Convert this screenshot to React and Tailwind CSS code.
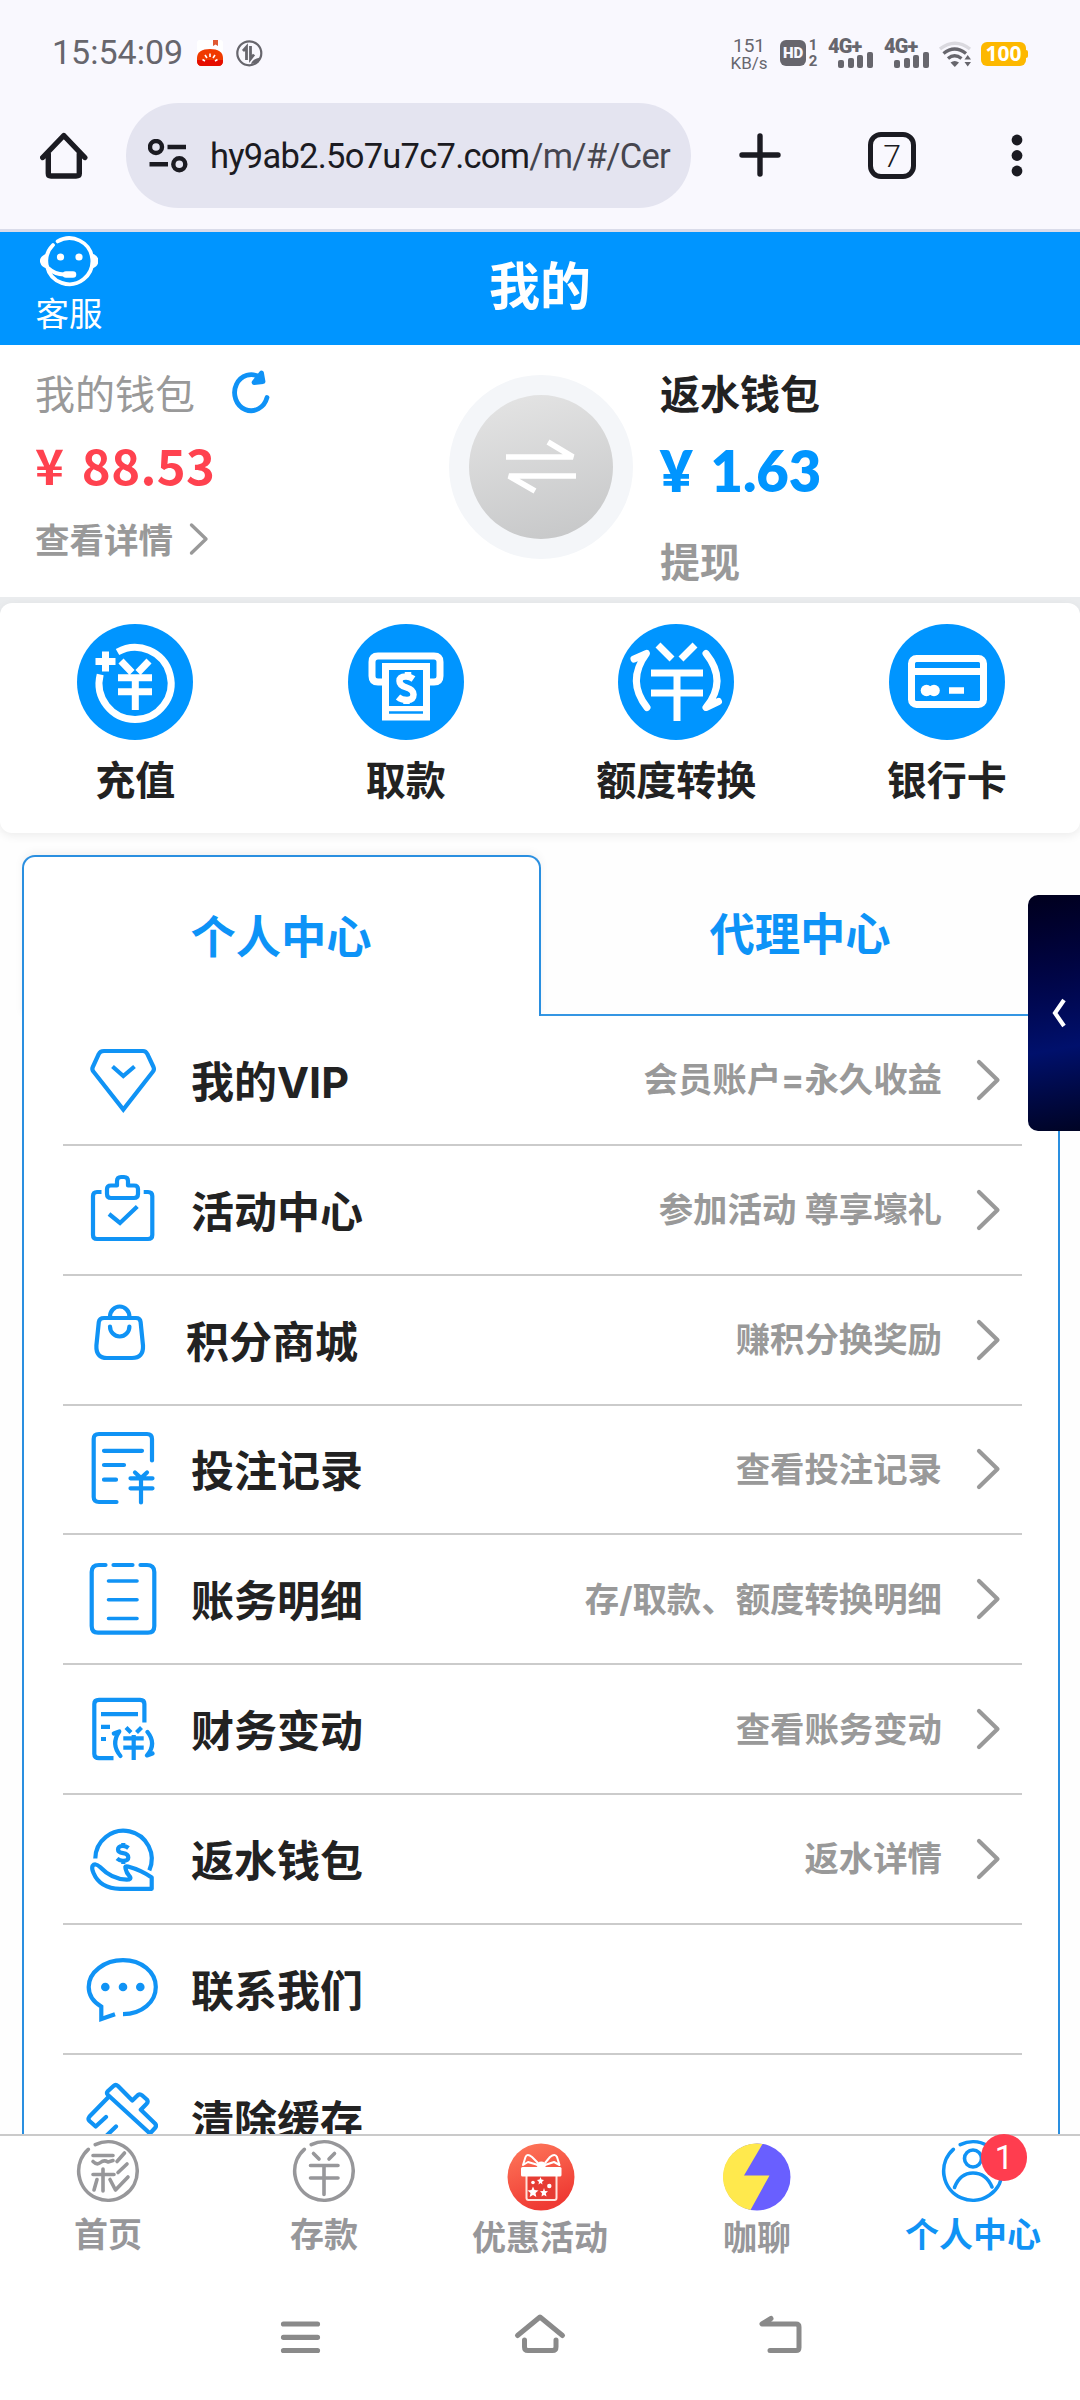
const ACTIONS = [
  { label: '充值', Icon: RechargeIcon },
  { label: '取款', Icon: WithdrawIcon },
  { label: '额度转换', Icon: TransferIcon },
  { label: '银行卡', Icon: BankCardIcon },
];

const MENU = [
  { label: '我的VIP', desc: '会员账户=永久收益', Icon: VipIcon },
  { label: '活动中心', desc: '参加活动 尊享壕礼', Icon: ActivityIcon },
  { label: '积分商城', desc: '赚积分换奖励', Icon: MallIcon, tight: true },
  { label: '投注记录', desc: '查看投注记录', Icon: RecordIcon },
  { label: '账务明细', desc: '存/取款、额度转换明细', Icon: LedgerIcon },
  { label: '财务变动', desc: '查看账务变动', Icon: ChangeIcon },
  { label: '返水钱包', desc: '返水详情', Icon: RebateIcon },
  { label: '联系我们', Icon: ContactIcon },
  { label: '清除缓存', Icon: ClearIcon },
];

const line = {
  fill: 'none',
  stroke: 'currentColor',
  strokeLinecap: 'round',
  strokeLinejoin: 'round',
};

function MenuSvg({ children }) {
  return (
    <svg width="72" height="80" viewBox="0 0 72 80" {...line} strokeWidth="4.2" className="shrink-0 text-[#1093f5]">
      {children}
    </svg>
  );
}

function VipIcon() {
  return (
    <MenuSvg>
      <path d="M18 11H57Q60 11 61.3 14L67.5 27Q68.6 29.5 67 31.5L37.3 69.5L7.4 31.5Q5.6 29.5 6.8 27L12.8 14Q14 11 18 11Z" strokeLinejoin="miter" />
      <path d="M26.5 26.5L37.3 36L48.5 26.5" strokeLinecap="butt" strokeLinejoin="miter" />
    </MenuSvg>
  );
}

function ActivityIcon() {
  return (
    <MenuSvg>
      <path d="M15.5 22H11Q7 22 7 26V65Q7 69 11 69H62Q66.3 69 66.3 65V26Q66.3 22 62 22H57.7" strokeLinecap="butt" />
      <path d="M31 15.5V11Q31 7 35 7H38Q42 7 42 11V15.5H48Q52 15.5 52 19V24Q52 28 48 28H25Q21 28 21 24V19Q21 15.5 25 15.5Z" />
      <path d="M23 44L34 53L51.3 36.5" strokeLinecap="butt" strokeLinejoin="miter" />
    </MenuSvg>
  );
}

function MallIcon() {
  return (
    <MenuSvg>
      <path d="M18 18H50Q54.2 18 54.6 22L57 45.5Q57.6 58 46 58H21Q9.8 58 10.4 45.5L12.8 22Q13.4 18 18 18Z" />
      <path d="M24 17.5V16.5A9.7 10 0 0 1 43.4 16.5V17.5" />
      <path d="M24 26.5A9.7 10 0 0 0 43.4 26.5" />
    </MenuSvg>
  );
}

function RecordIcon() {
  return (
    <MenuSvg>
      <path d="M30.5 73H13Q7.7 73 7.7 68V10Q7.7 5 13 5H61Q66 5 66 10V31.5" />
      <path d="M18 21.8H56M18 36H38M18 50.7H30" />
      <path d="M49 43.5L55 49L61 43.5M44.5 49.3H66.5M44.5 59.3H66.5M55 49V73.5" />
    </MenuSvg>
  );
}

function LedgerIcon() {
  return (
    <MenuSvg>
      <path d="M19.5 6H13Q5.7 6 5.7 13V67Q5.7 73.7 12 73.7H62Q68.3 73.7 68.3 67V13Q68.3 6 61 6H54.5M27.5 6H46.5" />
      <path d="M22.5 22H51M22.5 40.8H51M22.5 59.5H51" strokeWidth="3.6" />
    </MenuSvg>
  );
}

function ChangeIcon() {
  return (
    <MenuSvg>
      <g strokeLinecap="butt">
        <path d="M27.5 69.2H13Q8.3 69.2 8.3 65V15Q8.3 10.8 13 10.8H54Q58.4 10.8 58.4 15V33.5" />
        <path d="M15 25.2H52M15 37.8H24M15 50H20" />
        <path d="M40 38.5L45 43.5M55.5 38.5L50.5 43.5M37.3 49.3H57.7M37.3 58.6H57.7M47.7 46V71" />
      </g>
      <path d="M27.8 44.5L33.3 42.5Q24.5 55 34.5 67" />
      <path d="M61.5 43Q71 55 61 66.5L66.5 64.5" />
    </MenuSvg>
  );
}

function RebateIcon() {
  return (
    <MenuSvg>
      <path d="M9.3 39.5A28.2 28.2 0 1 1 63.3 51.3" strokeLinecap="butt" />
      <path d="M6.5 47Q9 43.5 14 48Q27 61.5 43 60.5Q46 59.5 43 56.5Q40.5 54 39.5 49.5Q38.5 46.5 42 47.5Q55 51 65.7 58.5V69.8H34Q14 69.5 7.5 54Q5.5 49.5 6.5 47Z" />
      <path d="M42.5 29Q40 27 37 27Q32 27 32 30.5Q32 33.5 37 34.2Q42.3 35 42.3 38.5Q42.3 41.8 37 41.8Q33.5 41.8 31 39.5M37.3 24V27M37.3 42V45" strokeLinecap="butt" />
    </MenuSvg>
  );
}

function ContactIcon() {
  return (
    <MenuSvg>
      <path d="M37 65.2C56 65 69.8 53 69.8 38C69.8 23 55.5 11.2 37 11.2S2.7 23 2.7 38C2.7 46 7.5 53 15.3 57.6V70L29 65.2" strokeLinecap="butt" strokeLinejoin="miter" />
      <g fill="currentColor" stroke="none">
        <circle cx="19.3" cy="38" r="4.3" />
        <circle cx="37" cy="38" r="4.3" />
        <circle cx="54.3" cy="38" r="4.3" />
      </g>
    </MenuSvg>
  );
}

function ClearIcon() {
  return (
    <MenuSvg>
      <path d="M64 54.5L22 16Q20 14 22 12L27.5 7Q29.7 5 32 7L46.3 21.5L52 16Q54 14.5 56 16.3L60.8 20.5Q62.6 22.5 60.5 24.8L54.8 30.8L69 44.5Q71 46.8 69 49Z" />
      <path d="M22.5 18L3.5 37.5Q1.5 40 3.5 42L9.7 47.5L20 38M30 47.5L16 61" />
    </MenuSvg>
  );
}

function RoundAction({ children }) {
  return (
    <svg width="116" height="116" viewBox="0 0 116 116" fill="none" stroke="white" strokeWidth="7">
      <circle cx="58" cy="58" r="58" fill="#0095ff" stroke="none" />
      {children}
    </svg>
  );
}

function RechargeIcon() {
  return (
    <RoundAction>
      <path d="M40.5 28A36 36 0 1 1 23.2 50.5" />
      <path d="M28.5 27.5V47.5M18.5 37.5H38.5" />
      <path d="M44 37L55 48.5M72 37L61 48.5M41 53.8H75M41 67.8H75M58.3 54V86" />
    </RoundAction>
  );
}

function WithdrawIcon() {
  return (
    <RoundAction>
      <path d="M36 58H30Q24 58 24 52V38Q24 32 30 32H86Q92 32 92 38V52Q92 58 86 58H80" />
      <path d="M37.5 42.5H78.5V93H37.5Z" />
      <path d="M34 82H82V96H34Z" fill="white" stroke="none" />
      <path d="M41 88.5H75" stroke="#0095ff" strokeWidth="2.4" />
      <path d="M65.5 55Q62 52.5 58 52.5Q51.5 52.5 51.5 57Q51.5 61.5 58.5 63.5Q65.5 65.5 65.5 70.5Q65.5 76 59 76Q53.5 76 50 73M60 48V53M58.5 75V80" strokeWidth="6.5" />
    </RoundAction>
  );
}

function TransferIcon() {
  return (
    <RoundAction>
      <path d="M40 21L54 35M77 21L63 35M33 49H85M33 69H85M59 50V97" />
      <path d="M16 35L28.5 29.5Q8 57 29 83.5" strokeLinecap="round" strokeLinejoin="round" />
      <path d="M88 29.5Q110 57 88 83.5L100.5 77.5" strokeLinecap="round" strokeLinejoin="round" />
    </RoundAction>
  );
}

function BankCardIcon() {
  return (
    <RoundAction>
      <rect x="22.5" y="34.5" width="72" height="46" rx="5" />
      <path d="M24 47.5H93" />
      <path d="M60 66.5H75" strokeWidth="6.5" />
      <circle cx="37.5" cy="66.5" r="5.8" fill="white" stroke="none" />
      <circle cx="45" cy="66.5" r="5.8" fill="white" stroke="none" />
    </RoundAction>
  );
}

function Signal() {
  return (
    <div className="flex h-[30px] w-[46px] flex-col">
      <span className="h-[14px] font-[Roboto] text-[20px] leading-[17px] font-black tracking-[-0.8px]">4G+</span>
      <div className="ml-[10px] flex h-4 items-end gap-[3.5px]">
        <i className="h-2 w-[6px] rounded-[2px] bg-[#67666d]" />
        <i className="h-[10px] w-[6px] rounded-[2px] bg-[#67666d]" />
        <i className="h-[13px] w-[6px] rounded-[2px] bg-[#67666d]" />
        <i className="h-4 w-[6px] rounded-[2px] bg-[#67666d]" />
      </div>
    </div>
  );
}

function StatusBar() {
  return (
    <div className="flex h-[103px] items-start pr-[52px] pl-[52px] text-[#67666d]">
      <span className="mt-[32px] w-[145px] font-[Roboto] text-[34px] leading-[40px] whitespace-nowrap">15:54:09</span>
      <svg width="26" height="26" viewBox="0 0 26 26" className="mt-10">
        <rect width="26" height="26" rx="3" fill="#fff" />
        <path d="M16 0H21V6L18.5 4.5L16 6Z" fill="#e05a33" />
        <path d="M0 18C0 12 5 9 13 9S26 12 26 18V21Q26 26 21 26H5Q0 26 0 21Z" fill="#f03a00" />
        <path d="M0 20H26V21Q26 26 21 26H5Q0 26 0 21Z" fill="#e50d00" />
        <path d="M13 13.5V17M8 15L10 18M18 15L16 18M5.5 19.5L8 21M20.5 19.5L18 21" stroke="#fff" strokeWidth="1.6" />
      </svg>
      <svg width="27" height="27" viewBox="0 0 27 27" className="mt-10 ml-[13px]" fill="none" stroke="currentColor">
        <circle cx="13.3" cy="13.3" r="12" strokeWidth="2.2" />
        <path d="M7 11L10.5 7V20M14.5 6V19L18 14.5" strokeWidth="2.8" />
        <path d="M15 24Q16 19 24 17.5L22 23Z" fill="currentColor" stroke="none" />
      </svg>
      <div className="mt-[37px] ml-auto flex w-[36px] flex-col items-center text-center font-[Roboto]">
        <span className="text-[19px] leading-[17px]">151</span>
        <span className="text-[17px] leading-[18px]">KB/s</span>
      </div>
      <div className="mt-10 ml-[13px] flex h-[26px] w-[26px] items-center justify-center rounded-[6px] bg-[#67666d] font-[Roboto] text-[15px] font-black text-[#f9f8fe]">HD</div>
      <div className="mt-[37px] ml-[2px] flex w-[10px] flex-col items-center font-[Roboto] text-[15px] leading-[16px] font-bold">
        <span>1</span>
        <span>2</span>
      </div>
      <div className="mt-[38px] ml-[10px] flex gap-[10px]">
        <Signal />
        <Signal />
      </div>
      <svg width="33" height="26" viewBox="0 0 33 26" className="mt-[41px] ml-[9px]" fill="none" stroke="currentColor" strokeWidth="3.4">
        <path d="M1 8Q16 -3.5 31 8" stroke="#dad9df" />
        <path d="M4.5 12.5Q15.5 3.5 27 12.5" />
        <path d="M9 17.5Q15.5 12 22.5 17.5" />
        <path d="M11.5 21.5L15.8 26L20 21.5Q15.8 18.5 11.5 21.5Z" fill="currentColor" stroke="none" />
        <path d="M25.5 18.5L28.7 14L32 18.5ZM25.5 21L28.7 25.5L32 21Z" fill="currentColor" stroke="none" />
      </svg>
      <div className="mt-[42px] ml-[9px] flex items-center">
        <div className="flex h-6 w-[45px] items-center justify-center rounded-[6px] bg-[#fdb800] font-['Noto_Sans'] text-[21px] font-bold text-white">100</div>
        <div className="h-2 w-[2px] rounded-r-full bg-[#fdb800]" />
      </div>
    </div>
  );
}

function BrowserBar() {
  return (
    <div className="flex h-[126px] items-start">
      <svg width="48" height="48" viewBox="0 0 48 48" className="mt-7 ml-10" {...line} strokeWidth="5.4" stroke="#1b1b22">
        <path d="M2.7 26.5L23.8 4.5L44.8 26.5M8.3 23V42.5Q8.3 45 11 45H36Q39.3 45 39.3 42.5V23" />
      </svg>
      <div className="ml-[38px] flex h-[105px] w-[565px] items-center rounded-full bg-[#e4e4f0] pl-[22px]">
        <svg width="40" height="34" viewBox="0 0 40 34" fill="none" stroke="#1b1b22" strokeWidth="4.4">
          <circle cx="8" cy="8" r="6" />
          <circle cx="31.3" cy="25.3" r="6" />
          <path d="M19.5 8H38M1.5 25.3H20" />
        </svg>
        <span className="ml-[22px] pt-[2px] font-[Roboto] text-[34.5px] tracking-[-0.75px] whitespace-nowrap text-[#1b1b22]">
          hy9ab2.5o7u7c7.com<span className="text-[#46464f]">/m/#/Cer</span>
        </span>
      </div>
      <svg width="42" height="44" viewBox="0 0 42 44" className="mt-[30px] ml-12" {...line} strokeWidth="5.4" stroke="#1b1b22">
        <path d="M21 3V41M3 22H39" />
      </svg>
      <div className="mt-[29px] ml-[87px] flex h-[47px] w-[48px] items-center justify-center rounded-[13px] border-[5px] border-[#1b1b22] font-[Roboto] text-[32px] font-light text-[#1b1b22]">7</div>
      <svg width="12" height="44" viewBox="0 0 12 44" className="mt-[31px] ml-[95px]" fill="#1b1b22">
        <circle cx="6" cy="6" r="5.4" />
        <circle cx="6" cy="21.5" r="5.4" />
        <circle cx="6" cy="37" r="5.4" />
      </svg>
    </div>
  );
}

function Header() {
  return (
    <div className="grid h-[116px] grid-cols-3 border-t-[3px] border-[#dadcea] bg-[#0095ff] text-white">
      <div className="ml-[35px] flex w-[68px] flex-col items-center">
        <svg width="58" height="52" viewBox="0 0 58 52" className="mt-1 shrink-0" {...line} strokeWidth="3.8">
          <path d="M17.6 5.4A23 23 0 1 1 13 9" />
          <path d="M6 20Q1 22.5 2 26Q3 29.5 7 30.5M53 20Q57.5 22.5 56.5 26Q55.5 29.5 52 30.5" fill="currentColor" />
          <path d="M8 32Q15 38.5 24 38.5" />
          <path d="M26 38.5H33" strokeWidth="6.5" />
          <circle cx="20.5" cy="21" r="3.6" fill="currentColor" stroke="none" />
          <circle cx="39" cy="21" r="3.6" fill="currentColor" stroke="none" />
        </svg>
        <span className="mt-[4px] text-[33.5px] leading-[40px] whitespace-nowrap">客服</span>
      </div>
      <h1 className="text-center text-[51px] leading-[103px] font-bold">我的</h1>
    </div>
  );
}

function Wallet() {
  return (
    <div className="flex h-[252px] bg-white">
      <div className="flex w-[449px] flex-col pl-[35px]">
        <div className="mt-[17px] flex h-[60px] items-center text-[40px] leading-[60px] text-[#999]">
          我的钱包
          <svg width="40" height="44" viewBox="0 0 40 44" className="ml-9" {...line} strokeWidth="4.8" stroke="#0f92f6">
            <path d="M29 7.5A16.5 18 0 1 0 36 27.5" />
            <path d="M30.5 3L32 11.5L23 12.5Z" fill="#0f92f6" />
          </svg>
        </div>
        <p className="mt-[12px] h-[60px] text-[49px] leading-[60px] font-bold tracking-[0.4px] text-[#ff424f] [word-spacing:6px]">¥ 88.53</p>
        <div className="mt-[19px] flex h-[50px] items-center text-[34.5px] leading-[50px] font-bold text-[#999]">
          查看详情
          <svg width="20" height="34" viewBox="0 0 20 34" className="mt-[2px] ml-[16px]" {...line} strokeWidth="3.4">
            <path d="M2.5 3L17 17L2.5 31" />
          </svg>
        </div>
      </div>
      <div className="mt-[30px] flex h-[184px] w-[184px] items-center justify-center rounded-full bg-[#f4f6f9]">
        <div className="flex h-[144px] w-[144px] items-center justify-center rounded-full bg-linear-165 from-[#e5e5e5] to-[#c5c6c7]">
          <svg width="72" height="60" viewBox="0 0 72 60" fill="none" strokeWidth="5.6" stroke="white">
            <path d="M1 20H68L43 5M71 39H4L30 54" strokeLinejoin="bevel" />
          </svg>
        </div>
      </div>
      <div className="flex flex-col pl-[27px]">
        <p className="mt-[17px] h-[60px] text-[40px] leading-[60px] font-bold text-[#222]">返水钱包</p>
        <p className="mt-[19px] h-[60px] font-[Lato] text-[56px] leading-[60px] font-extrabold text-[#0095ff] [word-spacing:5px]">¥ 1.63</p>
        <p className="mt-[29px] h-[60px] text-[40px] leading-[60px] font-bold text-[#999]">提现</p>
      </div>
    </div>
  );
}

function QuickActions() {
  return (
    <div className="relative z-10 bg-linear-to-b from-[#eaecee] from-10% to-[#fdfdfd] to-10% pt-[6px]">
      <div className="grid h-[230px] grid-cols-[repeat(4,270.5px)] rounded-[12px] bg-white shadow-[0_3px_10px_rgba(0,0,0,0.07)]">
        {ACTIONS.map(({ label, Icon }) => (
          <div key={label} className="flex flex-col items-center pt-[21px]">
            <Icon />
            <span className="mt-[8px] text-[40px] leading-[60px] font-bold text-[#222]">{label}</span>
          </div>
        ))}
      </div>
    </div>
  );
}

function MenuRow({ label, desc, Icon, tight }) {
  return (
    <div className="flex h-[129.85px] shrink-0 items-center border-b-2 border-[#cbcbcb] pr-[19px] pl-[23px] font-['Inter','Noto_Sans_CJK_SC',sans-serif] font-bold">
      <Icon />
      <span className={`pt-[4px] text-[43px] leading-[60px] text-[#222] ${tight ? 'ml-[28px]' : 'ml-[33px]'}`}>{label}</span>
      {desc && (
        <div className="ml-auto flex items-center text-[#999]">
          <span className="pt-[1px] text-[34.4px] leading-[50px]">{desc}</span>
          <svg width="28" height="44" viewBox="0 0 28 44" className="ml-[33px]" {...line} strokeWidth="4.2">
            <path d="M4 4L22.5 22L4 40" />
          </svg>
        </div>
      )}
    </div>
  );
}

function MemberPanel() {
  return (
    <div className="relative flex h-[1301px] flex-col bg-[#fefefe] pt-[22px] pr-[20px] pl-[22px]">
      <div className="flex h-[161px] shrink-0 text-[45.3px] font-bold text-[#0d93f7]">
        <div className="flex w-[519px] items-center justify-center rounded-t-[13px] border-2 border-b-0 border-[#2a8fe0] bg-white pr-[1px] pb-[4px] shadow-[0_-3px_8px_rgba(0,0,0,0.05)]">个人中心</div>
        <div className="flex flex-1 items-center justify-center border-b-2 border-[#3496e3] pr-[1px] pb-[6px]">代理中心</div>
      </div>
      <div className="flex min-h-0 flex-1 flex-col overflow-hidden border-x-2 border-[#2a8fe0] bg-white pr-[36px] pl-[39px]">
        {MENU.map((item) => (
          <MenuRow key={item.label} {...item} />
        ))}
      </div>
      {/* floating drawer handle */}
      <div className="absolute top-[62px] right-0 flex h-[236px] w-[52px] items-center justify-center rounded-l-[10px] bg-linear-170 from-[#00001e] via-[#00106c] via-65% to-[#000425] pb-2">
        <svg width="16" height="32" viewBox="0 0 16 32" className="mt-2 ml-[10px]" fill="none" stroke="white" strokeWidth="4.2">
          <path d="M13 3L4 16L13 29" />
        </svg>
      </div>
    </div>
  );
}

function RingSvg({ children }) {
  return (
    <svg width="64" height="64" viewBox="0 0 64 64" {...line} strokeWidth="3.6" className="mt-[3px]">
      <path d="M19.3 5.6A29.3 29.3 0 1 1 12.3 10.3" />
      {children}
    </svg>
  );
}

function GiftIcon() {
  return (
    <svg width="68" height="68" viewBox="0 0 68 68" className="mt-[7px] ml-[2px]" fill="none">
      <defs>
        <linearGradient id="gift" x1="0" y1="0" x2="0.4" y2="1">
          <stop offset="0" stopColor="#ff7a5c" />
          <stop offset="1" stopColor="#ef3a33" />
        </linearGradient>
      </defs>
      <circle cx="34" cy="34" r="33.5" fill="url(#gift)" />
      <path d="M19.5 33V55Q19.5 57 21.5 57H47.5Q49.5 57 49.5 55V33" stroke="#ffe3dc" strokeWidth="2" fill="#e63c33" />
      <rect x="14" y="24" width="40.5" height="9.5" rx="1.5" fill="#fff" />
      <path d="M31 20L25 14Q20 10 18.5 14L16 22L21 19L31 22M38 20L43 14Q48 10 50 14L52.5 22L47 19L38 22" stroke="#fff" strokeWidth="2" strokeLinejoin="round" />
      <ellipse cx="34.3" cy="22" rx="4.8" ry="3.4" fill="#fff" />
      <path d="M26 43.5L27.5 47L31.5 47.5L28.5 50L29.3 54L26 52L22.7 54L23.5 50L20.5 47.5L24.5 47Z" fill="#fff" />
      <path d="M37 45L38 48L41 48.3L38.8 50.3L39.5 53.5L37 52L34.5 53.5L35 50.3L33 48.3L36 48Z" fill="#fff" />
      <path d="M33.5 34L34.5 36.5L37 37L35 39L35.5 41.5L33.5 40L31.5 41.5L32 39L30 37L32.5 36.5Z" fill="#fff" />
      <circle cx="42.3" cy="43" r="2.2" fill="#fff" />
      <circle cx="26" cy="39.5" r="1.8" fill="#fff" />
    </svg>
  );
}

function TabBar() {
  return (
    <div className="grid h-[140px] grid-cols-5 border-t-2 border-[#cacaca] bg-white text-[34px] leading-[50px] font-bold text-[#97979a]">
      <div className="flex flex-col items-center">
        <RingSvg>
          <path d="M17 16.5H37M17 22.5Q21 26.5 24.5 23.5T32 23L37 21.5M17 35.5H38M27 30V52M21 40.5L18 51M34 40.5L39.5 51L52 38M48.5 14L41 22.5M51 25L42 33.5" />
        </RingSvg>
        <span className="mt-[5px]">首页</span>
      </div>
      <div className="flex flex-col items-center">
        <RingSvg>
          <path d="M21.5 14.5L27 20M42.5 14.5L37 20M18.5 26.5H46M18.5 39H46M32 27V55.5" />
        </RingSvg>
        <span className="mt-[5px]">存款</span>
      </div>
      <div className="flex flex-col items-center">
        <GiftIcon />
        <span>优惠活动</span>
      </div>
      <div className="flex flex-col items-center">
        <svg width="68" height="68" viewBox="0 0 68 68" className="mt-[7px] ml-[2px]">
          <circle cx="34" cy="34" r="33.5" fill="#695fff" />
          <path d="M39.5 1L21 32.5H46.5L27.5 67A33.5 33.5 0 0 1 39.5 1Z" fill="#ffe94d" />
        </svg>
        <span className="ml-[2px]">咖聊</span>
      </div>
      <div className="flex flex-col items-center text-[#1093f5]">
        <div className="relative ml-[2px]">
          <RingSvg>
            <circle cx="32" cy="19.5" r="8.5" />
            <path d="M13.5 48.5Q19 34 32 34T51 48" />
          </RingSvg>
          <span className="absolute top-[-2px] left-[40px] flex h-[47px] w-[46px] items-center justify-center rounded-full bg-[#ff3d4f] pt-[1px] font-[Roboto] text-[33px] font-normal text-white">1</span>
        </div>
        <span className="mt-[5px] ml-[2px]">个人中心</span>
      </div>
    </div>
  );
}

function SystemNav() {
  return (
    <div className="flex h-[126px] items-start justify-center gap-[180px] bg-white pt-[38px] text-[#8a8a8a]">
      <svg width="60" height="42" viewBox="0 0 60 42" {...line} strokeWidth="5.2">
        <path d="M13.5 12H47.5M13.5 25.3H47.5M13.5 38.5H47.5" />
      </svg>
      <svg width="60" height="42" viewBox="0 0 60 42" {...line} strokeWidth="5">
        <path d="M7.5 23.5L30 5L52.5 23.5M14.5 28V35Q14.5 38.5 18 38.5H42.5Q46 38.5 46 35V28" />
      </svg>
      <svg width="60" height="42" viewBox="0 0 60 42" {...line} strokeWidth="5">
        <path d="M21 6.5L12 12H46Q49 12 49 15V35.5Q49 38.5 46 38.5H20" />
      </svg>
    </div>
  );
}

export default function App() {
  return (
    <div className="flex h-[2400px] w-[1080px] flex-col overflow-hidden bg-[#f9f8fe] font-['Noto_Sans_CJK_SC',sans-serif]">
      <StatusBar />
      <BrowserBar />
      <Header />
      <Wallet />
      <QuickActions />
      <MemberPanel />
      <TabBar />
      <SystemNav />
    </div>
  );
}
